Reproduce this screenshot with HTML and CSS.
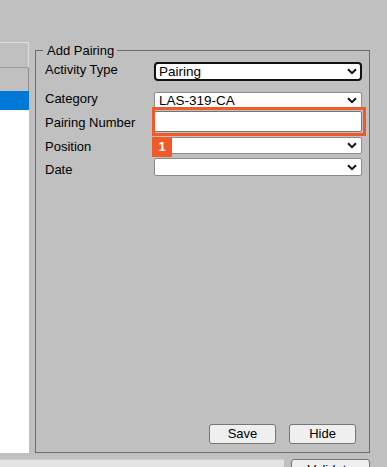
FILE: index.html
```html
<!DOCTYPE html>
<html lang="en">
<head>
<meta charset="utf-8">
<title>Add Pairing</title>
<link rel="stylesheet" href="styles.css">
</head>
<body>
<div class="app">
  <div class="left">
    <div class="lh1"></div>
    <div class="lh2"></div>
    <div class="lsel"></div>
    <div class="lbody"></div>
  </div>
  <fieldset class="pairing">
    <legend>Add Pairing</legend>
    <div class="form">
      <div class="row r1">
        <div class="lbl">Activity Type</div>
        <div class="sel focus"><span>Pairing</span><svg class="chev" width="10" height="7" viewBox="0 0 10 7"><path d="M1 1.2 L5 5.2 L9 1.2" fill="none" stroke="#111" stroke-width="2"/></svg></div>
      </div>
      <div class="row r2">
        <div class="lbl">Category</div>
        <div class="sel"><span>LAS-319-CA</span><svg class="chev" width="10" height="7" viewBox="0 0 10 7"><path d="M1 1.2 L5 5.2 L9 1.2" fill="none" stroke="#111" stroke-width="2"/></svg></div>
      </div>
      <div class="row r3">
        <div class="lbl">Pairing Number</div>
        <div class="field"><div class="inp"></div><div class="mark"></div></div>
      </div>
      <div class="row r4">
        <div class="lbl">Position</div>
        <div class="field"><div class="sel"><span></span><svg class="chev" width="10" height="7" viewBox="0 0 10 7"><path d="M1 1.2 L5 5.2 L9 1.2" fill="none" stroke="#111" stroke-width="2"/></svg></div><div class="badge">1</div></div>
      </div>
      <div class="row r5">
        <div class="lbl">Date</div>
        <div class="sel"><span></span><svg class="chev" width="10" height="7" viewBox="0 0 10 7"><path d="M1 1.2 L5 5.2 L9 1.2" fill="none" stroke="#111" stroke-width="2"/></svg></div>
      </div>
    </div>
    <div class="actions">
      <button class="btn">Save</button>
      <button class="btn">Hide</button>
    </div>
  </fieldset>
</div>
<div class="bottom">
  <div class="bfield"></div>
  <button class="btn validate">Validate</button>
</div>
</body>
</html>
```
FILE: styles.css
```css
html, body {
  margin: 0;
  padding: 0;
}
body {
  width: 387px;
  height: 467px;
  overflow: hidden;
  background: #c0c0c0;
  font-family: "Liberation Sans", Arial, sans-serif;
  font-size: 13px;
  color: #000;
}
.app {
  display: flex;
  height: 453px;
}
.left {
  width: 29px;
  margin-top: 42px;
  display: flex;
  flex-direction: column;
}
.lh1 {
  height: 24px;
  border-top: 1px solid #dedede;
  border-right: 1px solid #dedede;
  border-bottom: 1px solid #9c9c9c;
  width: 28px;
}
.lh2 {
  height: 23px;
  border-right: 1px solid #8c8c8c;
  width: 28px;
}
.lsel {
  height: 19px;
  background: #0078d7;
}
.lbody {
  flex: 1;
  background: #fff;
}
.pairing {
  box-sizing: border-box;
  margin: 43px 0 0 6px;
  padding: 0;
  width: 335px;
  border: 1px solid #6b6b6b;
  display: flex;
  flex-direction: column;
  min-width: 0;
}
.pairing legend {
  margin-left: 7px;
  padding: 0 3px 0 4px;
  font-size: 13px;
  line-height: 15px;
}
.form {
  display: flex;
  flex-direction: column;
  margin: 4px 0 0 9px;
}
.row {
  display: flex;
  align-items: flex-start;
}
.row > .sel,
.row > .field {
  width: 208px;
  flex: none;
}
.lbl {
  width: 109px;
  flex: none;
  white-space: nowrap;
  line-height: 15px;
}
.r1 { height: 19px; }
.r2 { height: 17px; margin-top: 11px; }
.r3 { height: 21px; margin-top: 2px; }
.r4 { height: 17px; margin-top: 5px; }
.r5 { height: 18px; margin-top: 4px; }
.r1 .lbl { margin-top: 0; }
.r2 .lbl { margin-top: -1px; }
.r3 .lbl { margin-top: 4px; }
.r4 .lbl { margin-top: 2px; }
.r5 .lbl { margin-top: 4px; }
.sel {
  box-sizing: border-box;
  display: flex;
  align-items: center;
  justify-content: space-between;
  background: #fff;
  border: 1px solid #8a8a8a;
  border-radius: 2px;
  padding: 0 4px;
  height: 100%;
  line-height: 15px;
  font-size: 13.5px;
}
.sel.focus {
  border: 2px solid #111;
  border-radius: 4px;
  padding: 0 3px;
}
.chev {
  flex: none;
}
.field {
  position: relative;
  height: 100%;
}
.inp {
  box-sizing: border-box;
  height: 100%;
  background: #fff;
  border: 1px solid #767676;
  border-radius: 2px;
}
.mark {
  position: absolute;
  left: -2px;
  right: -4px;
  top: -4px;
  bottom: -4px;
  border: 3px solid #f05a28;
}
.badge {
  position: absolute;
  left: -2px;
  top: 0;
  width: 20px;
  height: 20px;
  background: #f05a28;
  color: #fff;
  font-weight: bold;
  font-size: 13px;
  line-height: 20px;
  text-align: center;
}
.actions {
  margin-top: auto;
  margin-bottom: 8px;
  display: flex;
  justify-content: flex-end;
  gap: 13px;
  padding-right: 13px;
}
.btn {
  box-sizing: border-box;
  width: 67px;
  height: 20px;
  padding: 0;
  background: #efefef;
  border: 1px solid #767676;
  border-radius: 3px;
  font-family: "Liberation Sans", Arial, sans-serif;
  font-size: 13px;
  color: #000;
  line-height: 16px;
}
.bottom {
  display: flex;
  margin-top: 6px;
  height: 8px;
}
.bfield {
  box-sizing: border-box;
  width: 285px;
  height: 20px;
  background: #e3e3e3;
  border-top: 1px solid #d0d0d0;
  border-right: 1px solid #bdbdbd;
}
.validate {
  width: 79px;
  margin-left: 6px;
  flex: none;
  padding-top: 2px;
}
```
